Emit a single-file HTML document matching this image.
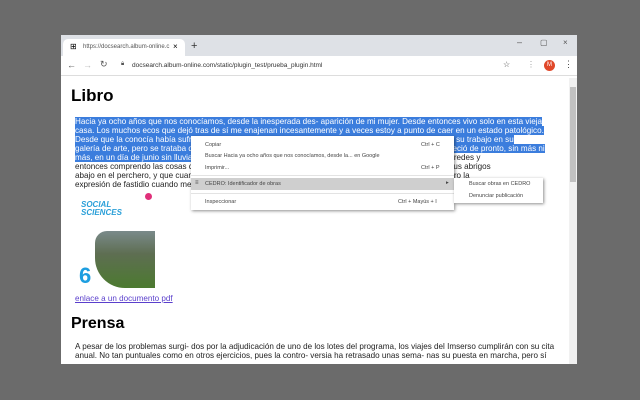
<!DOCTYPE html>
<html><head><meta charset="utf-8"><style>
*{margin:0;padding:0;box-sizing:border-box}
body{width:640px;height:400px;background:#6b6b6b;position:relative;overflow:hidden;font-family:"Liberation Sans",sans-serif}
.a{position:absolute;white-space:nowrap}
#win{position:absolute;left:61px;top:35px;width:516px;height:329px;background:#fff;overflow:hidden}
#title{position:absolute;left:0;top:0;width:516px;height:21px;background:#dee1e6}
#tab{position:absolute;left:2px;top:4px;width:122px;height:17px;background:#fff;border-radius:5px 5px 0 0}
#addr{position:absolute;left:0;top:21px;width:516px;height:20px;background:#fff;border-bottom:1px solid #ddd}
.t{font-size:8.1px;color:#222;position:absolute;left:14px;white-space:nowrap;line-height:9px}
.sel{background:#3b7ddd;color:#fff}
#menu{position:absolute;left:130px;top:101px;width:263px;height:74px;background:#fff;box-shadow:1px 1px 3px rgba(0,0,0,.45);font-size:5.5px;color:#444}
#menu .a{left:14px}
#sub{position:absolute;left:393px;top:143px;width:89px;height:25px;background:#fff;box-shadow:1px 1px 3px rgba(0,0,0,.45);font-size:5.5px;color:#444}
</style></head><body>
<div id="win">
<div id="title">
<div id="tab"><span class="a" style="left:7px;top:3px;font-size:8px">&#8862;</span><span class="a" style="left:20px;top:5px;font-size:6px;color:#555">https://docsearch.album-online.c</span><span class="a" style="left:110px;top:3px;font-size:8px">×</span></div>
<span class="a" style="left:130px;top:5px;font-size:11px;color:#333">+</span>
<span class="a" style="left:456px;top:2px;font-size:9px;color:#555">–</span>
<span class="a" style="left:479px;top:3px;font-size:8px;color:#555">▢</span>
<span class="a" style="left:502px;top:3px;font-size:8px;color:#555">×</span>
</div>
<div id="addr">
<span class="a" style="left:6px;top:4px;font-size:9px;color:#555">←</span>
<span class="a" style="left:22px;top:4px;font-size:9px;color:#bbb">→</span>
<span class="a" style="left:39px;top:3px;font-size:9px;color:#555">↻</span>
<span class="a" style="left:60px;top:5px;font-size:6px;color:#555">🔒&#xFE0E;</span>
<span class="a" style="left:71px;top:6px;font-size:6.5px;color:#333">docsearch.album-online.com/static/plugin_test/prueba_plugin.html</span>
<span class="a" style="left:442px;top:4px;font-size:8px;color:#444">☆</span>
<span class="a" style="left:466px;top:4px;font-size:8px;color:#999">⋮</span>
<div class="a" style="left:483px;top:4px;width:11px;height:11px;border-radius:50%;background:#e0482a;color:#fff;font-size:6px;text-align:center;line-height:11px">M</div>
<span class="a" style="left:503px;top:3px;font-size:9px;color:#444">⋮</span>
</div>
<div class="a" style="left:508px;top:43px;width:8px;height:286px;background:#f1f1f1"></div>
<div class="a" style="left:509px;top:52px;width:6px;height:95px;background:#c1c1c1"></div>
<div class="a" style="left:10px;top:51px;font-size:17px;font-weight:bold;color:#000">Libro</div>
<div class="t sel" style="top:82px">Hacia ya ocho años que nos conocíamos, desde la inesperada des- aparición de mi mujer. Desde entonces vivo solo en esta vieja</div>
<div class="t sel" style="top:91px">casa. Los muchos ecos que dejó tras de sí me enajenan incesantemente y a veces estoy a punto de caer en un estado patológico.</div>
<div class="t sel" style="top:100px">Desde que la conocía había sufrido mucho por no poder sino a ratos entender y comprender bien a fondo su trabajo en su</div>
<div class="t sel" style="top:109px">galería de arte, pero se trataba de una mujer muy culta y distinguida, que un buen día de verano desapareció de pronto, sin más ni</div>
<div class="t" style="top:118px"><span class="sel">más, en un día de junio sin lluvia</span> y sin aviso alguno. Ahora oigo sus pasos resonando despacio por las paredes y</div>
<div class="t" style="top:127px">entonces comprendo las cosas que no pude comprender, sus vestidos colgados todavía en el armario y sus abrigos</div>
<div class="t" style="top:136px">abajo en el perchero, y que cuando la recuerdo riendo en el jardín de la casa vieja también veo en su rostro la</div>
<div class="t" style="top:145px">expresión de fastidio cuando me ...</div>
<div class="a" style="left:14px;top:158px;width:80px;height:95px;background:#fff">
<div class="a" style="left:6px;top:8px;font-size:8px;font-weight:bold;font-style:italic;color:#2a9fd8;line-height:8px">SOCIAL<br>SCIENCES</div>
<div class="a" style="left:70px;top:0;width:7px;height:7px;border-radius:50%;background:#e0307a"></div>
<div class="a" style="left:20px;top:38px;width:60px;height:57px;background:linear-gradient(#7a8a8a,#5e6e52 40%,#4c7a30);border-radius:12px 0 0 30px"></div>
<div class="a" style="left:4px;top:70px;font-size:22px;font-weight:bold;color:#1d9ee0">6</div>
</div>
<div class="a" style="left:14px;top:259px;font-size:8.1px;color:#5a3fcc;text-decoration:underline">enlace a un documento pdf</div>
<div class="a" style="left:10px;top:280px;font-size:16px;font-weight:bold;color:#000">Prensa</div>
<div class="t" style="top:307px">A pesar de los problemas surgi- dos por la adjudicación de uno de los lotes del programa, los viajes del Imserso cumplirán con su cita</div>
<div class="t" style="top:316px">anual. No tan puntuales como en otros ejercicios, pues la contro- versia ha retrasado unas sema- nas su puesta en marcha, pero sí</div>
<div id="menu">
<span class="a" style="top:6px">Copiar</span><span class="a" style="left:230px;top:6px">Ctrl + C</span>
<span class="a" style="top:17px">Buscar Hacia ya ocho años que nos conocíamos, desde la... en Google</span>
<span class="a" style="top:29px">Imprimir...</span><span class="a" style="left:230px;top:29px">Ctrl + P</span>
<div class="a" style="left:0;top:39px;width:263px;height:1px;background:#e3e3e3"></div>
<div class="a" style="left:0;top:42px;width:263px;height:12px;background:#cfcfcf"></div>
<span class="a" style="left:4px;top:44px;font-size:6px">&#8801;</span>
<span class="a" style="top:45px">CEDRO: Identificador de obras</span><span class="a" style="left:255px;top:44px">▸</span>
<div class="a" style="left:0;top:57px;width:263px;height:1px;background:#e3e3e3"></div>
<span class="a" style="top:63px">Inspeccionar</span><span class="a" style="left:207px;top:63px">Ctrl + Mayús + I</span>
</div>
<div id="sub">
<span class="a" style="left:15px;top:3px">Buscar obras en CEDRO</span>
<span class="a" style="left:15px;top:15px">Denunciar publicación</span>
</div>
</div>
</body></html>
